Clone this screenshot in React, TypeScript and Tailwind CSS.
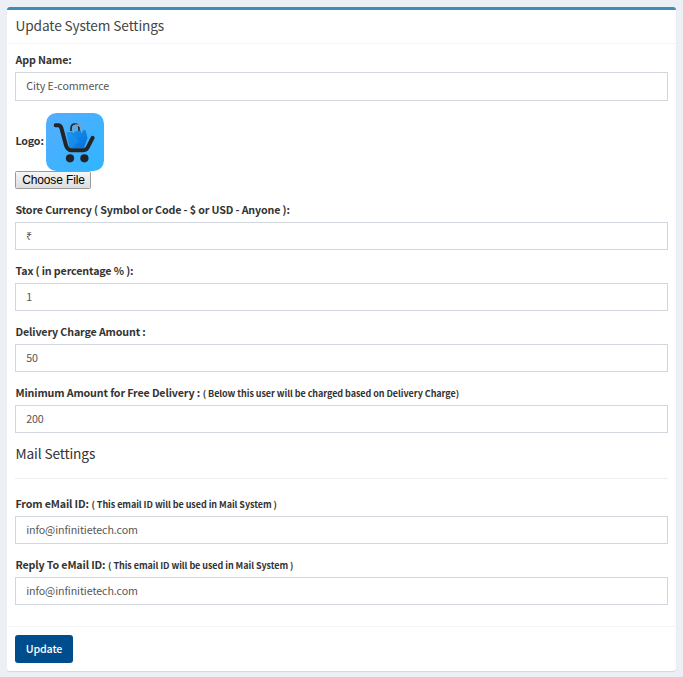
function Field({ label, note, value, tall = false }: { label: string; note?: string; value: string; tall?: boolean }) {
  return (
    <div>
      <label className="flex h-[19px] items-baseline whitespace-pre pl-[0.5px] text-[10.7px] leading-[14px] font-bold tracking-[-0.14px] text-[#333]">
        <span>{label}</span>
        {note && <span className="ml-[2.7px] text-[9px] tracking-[-0.06px]">{note}</span>}
      </label>
      <div
        className={`flex items-start border border-[#d2d6de] pt-[6px] pl-[10.2px] text-[10.7px] leading-[14px] tracking-[-0.09px] text-[#555] ${tall ? "h-[29px]" : "h-[28px]"}`}
      >
        <span>{value}</span>
      </div>
    </div>
  );
}

function Logo() {
  return (
    <svg width="58" height="58" viewBox="0 0 58 58" className="ml-[2px] block">
      <defs>
        <linearGradient id="tile" x1="0" y1="0" x2="1" y2="1">
          <stop offset="0" stopColor="#55adff" />
          <stop offset="1" stopColor="#2fb5ff" />
        </linearGradient>
        <linearGradient id="bag" x1="0" y1="0" x2="1" y2="1">
          <stop offset="0" stopColor="#1599f2" />
          <stop offset="1" stopColor="#086cda" />
        </linearGradient>
      </defs>
      <rect width="58" height="58" rx="10.5" fill="url(#tile)" />
      <path d="M25 18v-2.500q0-4.500 4-4.500t4 4.500V18" fill="none" stroke="#272a2e" strokeWidth="1.700" />
      <path d="M20.500 19.500L39.500 17l2 8-3.500 10H23.500z" fill="url(#bag)" />
      <path d="M26 21l7 7-7 7h-2.500l-3-15.500z" fill="#2196ef" opacity=".5" />
      <path d="M27.500 20v-3.500q0-4.300 3.800-4.300t4.200 4.300l.5 3" fill="none" stroke="#8c9dab" strokeWidth="1.700" />
      <path
        d="M9.700 12.300h2.300q2.500 0 3.300 2.500l4.600 17.300q1.300 5.100 5.300 5.100h12.300q2.800 0 4.100-2.500l5-9.800"
        fill="none"
        stroke="#222427"
        strokeWidth="4"
        strokeLinecap="round"
        strokeLinejoin="round"
      />
      <circle cx="24" cy="45.300" r="4.100" fill="#222427" />
      <circle cx="38.400" cy="45.300" r="4.100" fill="#222427" />
    </svg>
  );
}

export default function App() {
  return (
    <div className="h-[677px] bg-[#ecf0f5] pt-[7px] pl-[7px] font-['Noto_Sans_CJK_SC',sans-serif]">
      <div className="flex h-[664px] w-[669px] flex-col rounded-[3px] border-t-[3px] border-[#3c8dbc] bg-white shadow-[0_1px_1px_rgba(0,0,0,0.1)]">
        <h3 className="h-[34px] border-b border-[#f4f4f4] px-[8.5px] pt-[5px] text-[13.7px] leading-[20px] tracking-[-0.13px] text-[#444]">
          Update System Settings
        </h3>
        <div className="flex flex-col px-[8px] pt-[9px]">
          <Field label="App Name:" value="City E-commerce" tall />
          <div className="mt-[12px] flex items-center pl-[0.4px] text-[10.7px] font-bold tracking-[-0.14px] text-[#333]">
            <span className="w-[28.6px] pb-[2px] leading-[14px]">Logo:</span>
            <Logo />
          </div>
          <button className="h-[18px] w-[76px] rounded-[1.500px] border border-[#999] bg-linear-to-b from-[#f6f6f6] to-[#dddddd] pt-px pl-px text-center font-['Liberation_Sans',sans-serif] text-[12px] leading-[15px] tracking-[-0.12px] text-black">
            Choose File
          </button>
          <div className="mt-[14px] flex flex-col gap-[14px]">
            <Field label="Store Currency ( Symbol or Code - $ or USD - Anyone ):" value="₹" />
            <Field label="Tax ( in percentage % ):" value="1" />
            <Field label="Delivery Charge Amount :" value="50" />
            <Field
              label="Minimum Amount for Free Delivery :"
              note="( Below this user will be charged based on Delivery Charge)"
              value="200"
            />
          </div>
          <h4 className="mt-[10px] h-[36px] border-b border-[#eee] pl-[0.5px] text-[13.7px] leading-[20px] tracking-[-0.13px] text-[#333]">
            Mail Settings
          </h4>
          <div className="mt-[18px] flex flex-col gap-[14px]">
            <Field label="From eMail ID:" note="( This email ID will be used in Mail System )" value="info@infinitietech.com" />
            <Field label="Reply To eMail ID:" note="( This email ID will be used in Mail System )" value="info@infinitietech.com" />
          </div>
        </div>
        <div className="mt-[21px] flex border-t border-[#f4f4f4] px-[8px] pt-[8px]">
          <button className="block h-[28px] w-[58px] rounded-[3px] bg-[#004d8d] text-[10.7px] leading-[28px] font-medium tracking-[-0.15px] text-white">
            Update
          </button>
        </div>
      </div>
    </div>
  );
}
